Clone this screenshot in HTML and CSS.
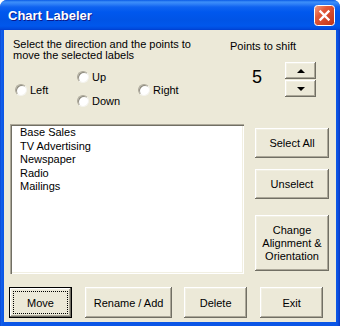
FILE: index.html
```html
<!DOCTYPE html>
<html lang="en">
<head>
    <meta charset="UTF-8">
    <title>Chart Labeler</title>
    <link rel="stylesheet" href="styles.css">
</head>
<body>
    <div class="window">
        <div class="titlebar">
            <span class="title">Chart Labeler</span>
            <button class="close" title="Close">
                <svg width="21" height="21" viewBox="0 0 21 21">
                    <defs>
                        <linearGradient id="closeGrad" x1="0" y1="0" x2="1" y2="1">
                            <stop offset="0" stop-color="#f3a187"/>
                            <stop offset="0.35" stop-color="#e2593a"/>
                            <stop offset="1" stop-color="#bd3215"/>
                        </linearGradient>
                    </defs>
                    <rect x="0.5" y="0.5" width="20" height="20" rx="3" fill="url(#closeGrad)" stroke="#fff"/>
                    <path d="M6.5 6.5 L14.5 14.5 M14.5 6.5 L6.5 14.5" stroke="#fff" stroke-width="2.4" stroke-linecap="square"/>
                </svg>
            </button>
        </div>

        <div class="client">
            <div class="top">
                <div class="direction">
                    <p class="hint">Select the direction and the points to<br>move the selected labels</p>
                    <div class="radios">
                        <label class="radio r-left"><span class="dot"></span>Left</label>
                        <label class="radio r-up"><span class="dot"></span>Up</label>
                        <label class="radio r-down"><span class="dot"></span>Down</label>
                        <label class="radio r-right"><span class="dot"></span>Right</label>
                    </div>
                </div>
                <div class="points">
                    <div class="points-label">Points to shift</div>
                    <div class="points-row">
                        <span class="value">5</span>
                        <div class="spin">
                            <button class="btn spin-btn"><span class="arrow-up"></span></button>
                            <button class="btn spin-btn"><span class="arrow-down"></span></button>
                        </div>
                    </div>
                </div>
            </div>

            <div class="middle">
                <ul class="listbox">
                    <li>Base Sales</li>
                    <li>TV Advertising</li>
                    <li>Newspaper</li>
                    <li>Radio</li>
                    <li>Mailings</li>
                </ul>
                <div class="side">
                    <button class="btn side-btn">Select All</button>
                    <button class="btn side-btn unselect">Unselect</button>
                    <button class="btn side-btn tall">Change<br>Alignment &amp;<br>Orientation</button>
                </div>
            </div>

            <div class="bottom">
                <button class="btn default">Move</button>
                <button class="btn wide">Rename / Add</button>
                <button class="btn">Delete</button>
                <button class="btn">Exit</button>
            </div>
        </div>
    </div>
</body>
</html>
```

FILE: styles.css
```css
* {
    box-sizing: border-box;
}

body {
    margin: 0;
    background-color: #fff;
    font-family: "Liberation Sans", Arial, sans-serif;
    font-size: 11px;
    color: #000;
}

.window {
    width: 340px;
    height: 326px;
    display: flex;
    flex-direction: column;
    border-radius: 7px 7px 0 0;
    background: linear-gradient(to right, #0a3cc8 0, #1262ec 1px, #0b56e6 3px, #0b56e6 calc(100% - 3px), #0a44d4 calc(100% - 1px), #0a34b8 100%);
    overflow: hidden;
}

.titlebar {
    height: 30px;
    display: flex;
    align-items: center;
    justify-content: space-between;
    padding: 0 5px 0 8px;
    background: linear-gradient(to bottom, #0a5ae6 0, #3d8ff9 2px, #2f80f7 4px, #0f63f0 7px, #0058ee 12px, #0054e6 20px, #0057ec 26px, #0049db 29px, #003ccf 30px);
}

.title {
    color: #fff;
    font-weight: bold;
    font-size: 13px;
    text-shadow: 1px 1px #0c1a8c;
    padding-top: 1px;
}

.close {
    width: 21px;
    height: 21px;
    padding: 0;
    border: none;
    background: none;
    display: block;
}

.close svg {
    display: block;
}

.client {
    flex: 1;
    margin: 0 4px 4px;
    background-color: #ece9d8;
    display: flex;
    flex-direction: column;
}

.top {
    height: 94px;
    display: flex;
}

.direction {
    width: 226px;
    padding: 9px 0 0 9px;
}

.hint {
    margin: 0;
    line-height: 11px;
}

.radios {
    display: grid;
    grid-template-columns: 62px 61px auto;
    grid-template-rows: 24px 24px;
    margin: 4px 0 0 2px;
}

.radio {
    display: flex;
    align-items: center;
    gap: 3px;
}

.r-left {
    grid-column: 1;
    grid-row: 1 / span 2;
    padding-top: 2px;
}

.r-up {
    grid-column: 2;
    grid-row: 1;
}

.r-down {
    grid-column: 2;
    grid-row: 2;
}

.r-right {
    grid-column: 3;
    grid-row: 1 / span 2;
    padding-top: 2px;
}

.dot {
    width: 12px;
    height: 12px;
    border-radius: 50%;
    background-color: #fff;
    border: 1px solid;
    border-color: #aca899 #f4f3ee #f4f3ee #aca899;
    box-shadow: inset 1px 1px 0 #8d8a7d;
}

.points {
    padding-top: 11px;
}

.points-label {
    line-height: 11px;
}

.points-row {
    display: flex;
    align-items: flex-start;
    margin-top: 10px;
}

.value {
    width: 55px;
    padding-left: 22px;
    margin-top: 6px;
    font-size: 18px;
    line-height: 18px;
}

.spin {
    display: flex;
    flex-direction: column;
    gap: 1px;
}

.btn {
    background-color: #ece9d8;
    border: none;
    padding: 0;
    font: inherit;
    color: #000;
    box-shadow: inset -1px -1px #716f64, inset 1px 1px #fff, inset -2px -2px #aca899, inset 2px 2px #f1efe2;
    position: relative;
}

.spin-btn {
    width: 31px;
    height: 17px;
    display: flex;
    align-items: center;
    justify-content: center;
}

.arrow-up {
    width: 0;
    height: 0;
    border-left: 4px solid transparent;
    border-right: 4px solid transparent;
    border-bottom: 4px solid #000;
}

.arrow-down {
    width: 0;
    height: 0;
    border-left: 4px solid transparent;
    border-right: 4px solid transparent;
    border-top: 4px solid #000;
}

.middle {
    display: flex;
    gap: 11px;
    margin-left: 6px;
}

.listbox {
    width: 234px;
    height: 150px;
    margin: 0;
    padding: 2px 0 0 10px;
    list-style-type: none;
    background-color: #fff;
    box-shadow: inset 1px 1px #aca899, inset 2px 2px #716f64, inset -1px -1px #fff, inset -2px -2px #f1efe2;
}

.listbox li {
    line-height: 13.5px;
}

.side {
    display: flex;
    flex-direction: column;
    padding-top: 4px;
}

.side-btn {
    width: 74px;
    height: 30px;
}

.unselect {
    margin-top: 11px;
}

.tall {
    height: 56px;
    margin-top: 16px;
    line-height: 13px;
}

.bottom {
    display: flex;
    margin: 13px 0 0 5px;
}

.bottom .btn {
    width: 65px;
    height: 31px;
    margin-right: 13px;
}

.bottom .wide {
    width: 90px;
    margin-right: 12px;
}

.default {
    border: 1px solid #000;
}

.default::after {
    content: "";
    position: absolute;
    top: 3px;
    left: 3px;
    right: 3px;
    bottom: 3px;
    border: 1px dotted #000;
}
```
